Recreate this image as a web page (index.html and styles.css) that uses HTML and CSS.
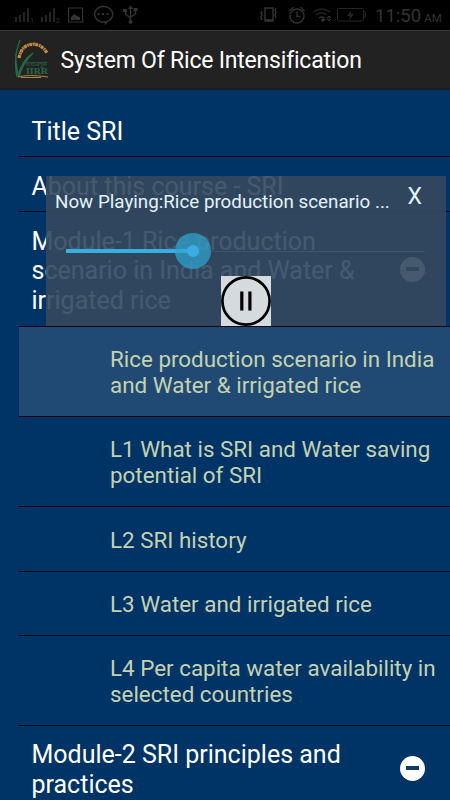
FILE: index.html
```html
<!DOCTYPE html>
<html lang="en">
<head>
<meta charset="utf-8">
<title>System Of Rice Intensification</title>
<link rel="stylesheet" href="styles.css">
</head>
<body>
<div class="screen">
  <div class="status">
    <svg class="status-icons" width="130" height="30" viewBox="0 0 130 30" fill="none" stroke="currentColor">
      <path stroke-width="1.4" d="M2 22v-5M6 22v-7M10 22v-10M14 22V8"/>
      <path stroke-width="1.4" d="M28 22v-5M32 22v-7M36 22v-10M40 22V8"/>
      <text x="16" y="23" class="sim">1</text><text x="42" y="23" class="sim">2</text>
      <path stroke-width="1.2" d="M54.600 8h14v14h-14z"/><path fill="currentColor" stroke="none" d="M57 20v-3l3-3 3 2 3 1v3z"/>
      <path stroke-width="1.4" d="M91.500 23.500v-1.500h-3a9 7.800 0 1 1 4.500-.5z"/>
      <path stroke-width="2" d="M83.500 14h2M88 14h2M92.500 14h2"/>
      <path stroke-width="1.400" d="M116.500 22V7M111.500 11v3l5 4M121.500 10v4l-5 3"/><path fill="currentColor" stroke="none" d="M114 9l2.500-4 2.500 4zM109 9h4v3h-4zM119.500 8h4v3h-4z"/><circle cx="116.500" cy="22" r="1.500" fill="currentColor"/>
    </svg>
    <svg class="status-icons" width="108" height="30" viewBox="0 0 108 30" fill="none" stroke="currentColor">
      <path stroke-width="1.400" d="M6 8h8v13H6zM6 20h8M3 11l-1 2 1 2-1 2 1 3M17 8l-1 2 1 2-1 3 1 3"/>
      <circle cx="38" cy="16" r="7" stroke-width="1.300"/><path stroke-width="1.300" d="M38 11.500v5h3.500M30.500 11l4-4M41.500 7l4 4"/>
      <g opacity=".65"><path stroke-width="1.300" d="M54 12q9-6 17 0M57 15q6-4 11 0"/></g>
      <path stroke-width="1.300" d="M60 18q3-2 5 0"/><circle cx="64" cy="20" r="1.300" fill="currentColor"/><path stroke-width="1" d="M70 16v5M68 18l2-2 2 2M68 19l2 2 2-2"/>
      <g opacity=".75"><rect x="78.500" y="8.500" width="26" height="12.500" rx="1"/><path d="M105 12h1.500v5H105"/><path fill="currentColor" stroke="none" d="M92 11l-4 5h3l-1 4 5-6h-3z"/></g>
    </svg>
    <span class="clock">11:50 <small>AM</small></span>
  </div>
  <header class="bar">
    <svg class="logo" width="36" height="42" viewBox="0 0 36 42" fill="none">
      <path d="M6 1Q-1 19 3 38M4 37Q8 21 19 14Q8 25 5 38M4 35Q1 20 2 14" stroke="#276b43" stroke-width="1.300"/>
      <path d="M5 19Q8 5 19 5.500Q28 5 33 14" stroke="#c78c48" stroke-width="3.200" stroke-dasharray="3 .8 1.500 .6"/>
      <path d="M6 16Q10 3 22 4" stroke="#b57734" stroke-width="1"/>
      <text x="12" y="26.500" class="logo-hindi" textLength="21" lengthAdjust="spacingAndGlyphs">राचाउनूसं</text>
      <text x="12" y="35" class="logo-name" textLength="22" lengthAdjust="spacingAndGlyphs">IIRR</text>
      <path d="M4 38Q14 35 34 38M7 38.500h20" stroke="#a98549" stroke-width="1"/>
    </svg>
    <h1>System Of Rice Intensification</h1>
  </header>
  <main class="list">
    <div class="row r-title">Title SRI</div>
    <div class="row r-about">About this course - SRI</div>
    <div class="row r-module"><span>Module-1 Rice production<br>scenario in India and Water &amp;<br>irrigated rice</span><i class="minus"></i></div>
    <div class="row sub two active">Rice production scenario in India<br>and Water &amp; irrigated rice</div>
    <div class="row sub two">L1 What is SRI and Water saving<br>potential of SRI</div>
    <div class="row sub one">L2 SRI history</div>
    <div class="row sub one short">L3 Water and irrigated rice</div>
    <div class="row sub two">L4 Per capita water availability in<br>selected countries</div>
    <div class="row r-last"><span>Module-2 SRI principles and<br>practices</span><i class="minus"></i></div>
  </main>
  <section class="player">
    <div class="player-head"><span class="now">Now Playing:Rice production scenario ...</span><span class="close">X</span></div>
    <div class="seek"><div class="done"></div><div class="thumb"></div><div class="rest"></div></div>
    <svg class="pause" width="50" height="50" viewBox="0 0 50 50">
      <path fill="#d5dade" d="M0 0h50v50H0z"/><circle cx="25" cy="25" r="23.600" fill="none" stroke="#000" stroke-width="2.700"/>
      <path d="M20.800 15.500v19M28.900 15.500v19" stroke="#000" stroke-width="3.200"/>
    </svg>
  </section>
</div>
</body>
</html>
```
FILE: styles.css
```css
* { box-sizing: border-box; }
body { margin: 0; background: #003366; font-family: Roboto, sans-serif; }
.screen { position: relative; width: 450px; height: 800px; overflow: hidden; background: #003366; }
.status { display: flex; height: 30px; padding: 0 10px 0 14px; background: #000; color: #333; }
.status-icons { flex: none; }
.status-icons + .status-icons { margin-left: 115px; }
.sim { font-size: 7px; fill: currentColor; stroke: none; }
.clock { margin-left: 8px; font-size: 18.5px; line-height: 32px; white-space: nowrap; }
.clock small { font-size: 11.5px; margin-left: -1.5px; }
.bar { display: flex; align-items: center; height: 60px; padding-left: 14px; background: #222; border-top: 1px solid #3b3b3b; border-bottom: 2px solid #191c20; }
.logo { flex: none; margin-top: 1px; }
.logo-hindi { font: 7px "Noto Sans", sans-serif; fill: #276b43; }
.logo-name { font: bold 8px "Liberation Serif", serif; fill: #276b43; }
h1 { margin: 2px 0 0 10.5px; font-size: 23px; letter-spacing: -.2px; font-weight: 400; line-height: 30px; color: #fff; white-space: nowrap; }
.list { padding-left: 19px; }
.row { display: flex; align-items: center; border-bottom: 1px solid #00050f; padding-left: 12.5px; font-size: 25px; line-height: 29.4px; color: #fff; white-space: nowrap; }
.r-title { height: 67px; padding-top: 17px; }
.r-about { height: 55px; padding-top: 5px; }
.r-module { height: 115px; padding-top: 4px; }
.r-module .minus { margin-top: -4px; }
.r-module, .r-last { justify-content: space-between; padding-right: 25px; }
.sub { padding-left: 91px; font-size: 22.4px; line-height: 26.3px; color: #c5d2b0; }
.two { height: 90px; padding-top: 1.5px; }
.one { height: 65px; padding-top: 2px; }
.short { height: 64px; }
.active { background: #204a73; }
.r-last { height: 87px; border: 0; }
.minus { display: flex; align-items: center; justify-content: center; width: 25px; height: 25px; border-radius: 50%; background: #fff; }
.r-last .minus { margin-top: -3px; }
.minus::before { content: ""; width: 13px; height: 4px; background: #0b3c62; }
.player { position: absolute; left: 46px; top: 176px; width: 400px; height: 150px; background: rgba(53, 73, 94, .91); color: #e3f3fc; }
.player-head { display: flex; justify-content: space-between; height: 50px; padding: 0 24px 0 9px; }
.now { font-size: 18.8px; line-height: 53px; white-space: nowrap; }
.close { font-size: 23px; line-height: 41px; }
.seek { display: flex; align-items: center; height: 50px; padding: 0 21px 0 20px; }
.done { width: 127px; height: 4px; background: #38afe0; }
.thumb { display: flex; align-items: center; justify-content: center; width: 36px; height: 36px; margin-left: -18px; border-radius: 50%; background: rgba(45, 166, 212, .7); }
.thumb::before { content: ""; width: 12px; height: 12px; border-radius: 50%; background: #38afe0; }
.rest { flex: 1; height: 1px; background: #3c536b; }
.pause { display: block; margin-left: 175px; }
```
